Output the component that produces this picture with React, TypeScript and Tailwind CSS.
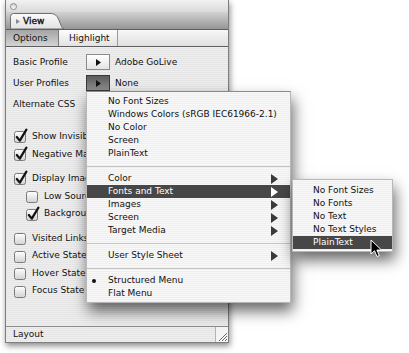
import React from "react";

function Check({ checked }: { checked?: boolean }) {
  return (
    <svg width="14" height="16" viewBox="0 0 14 16" className="shrink-0">
      <defs>
        <linearGradient id="cbg" x1="0" y1="0" x2="0" y2="1">
          <stop offset="0" stopColor="#ffffff" />
          <stop offset="1" stopColor="#d2d2d2" />
        </linearGradient>
      </defs>
      <rect x="0.5" y="3.5" width="11" height="11" rx="2" fill="url(#cbg)" stroke="#7a7a7a" />
      {checked && (
        <path
          d="M2.8 9 L5.8 12.6 L12.4 1.6"
          stroke="#111"
          strokeWidth="2.2"
          fill="none"
          strokeLinecap="round"
          strokeLinejoin="round"
        />
      )}
    </svg>
  );
}

function CheckRow({
  label,
  checked,
  indent,
  h18,
}: {
  label: string;
  checked?: boolean;
  indent?: boolean;
  h18?: boolean;
}) {
  return (
    <div
      className={`flex items-center gap-[4px] whitespace-nowrap ${h18 ? "h-[18px]" : "h-[17px]"} ${
        indent ? "pl-[20px]" : "pl-[8px]"
      }`}
    >
      <Check checked={checked} />
      <span className={`overflow-hidden ${indent ? "w-[43px]" : "w-[54px]"}`}>{label}</span>
    </div>
  );
}

function TriBtn({ pressed }: { pressed?: boolean }) {
  return (
    <div
      className={`w-[24px] h-[16px] border flex items-center justify-center ${
        pressed
          ? "bg-gradient-to-b from-[#5c5c5c] to-[#8e8e8e] border-[#3a3a3a]"
          : "bg-gradient-to-b from-[#ffffff] to-[#e4e4e4] border-[#8a8a8a]"
      }`}
    >
      <svg width="5" height="7" viewBox="0 0 5 7">
        <path d="M0 0 L5 3.5 L0 7 Z" fill="#111" />
      </svg>
    </div>
  );
}

function Arrow({ white }: { white?: boolean }) {
  return (
    <svg width="7" height="10" viewBox="0 0 7 10" className="shrink-0">
      <path d="M0 0 L7 5 L0 10 Z" fill={white ? "#ffffff" : "#3a3a3a"} />
    </svg>
  );
}

function Item({
  label,
  arrow,
  hl,
  bullet,
}: {
  label: string;
  arrow?: boolean;
  hl?: boolean;
  bullet?: boolean;
}) {
  return (
    <div
      className={`h-[13px] flex items-center pr-[12px] whitespace-nowrap ${
        hl ? "bg-[#474747] text-white" : ""
      }`}
    >
      <div className="w-[21px] h-full flex items-center pl-[5px]">
        {bullet && <div className="w-[4px] h-[4px] rounded-full bg-[#111]" />}
      </div>
      <span className="flex-1">{label}</span>
      {arrow && <Arrow white={hl} />}
    </div>
  );
}

function Sep() {
  return (
    <div className="h-[12px] flex items-center">
      <div className="w-full h-[1px] bg-[#c4c4c4]" />
    </div>
  );
}

function SubItem({ label, hl }: { label: string; hl?: boolean }) {
  return (
    <div
      className={`h-[13px] flex items-center pl-[20px] whitespace-nowrap ${
        hl ? "bg-[#474747] text-white" : ""
      }`}
    >
      {label}
    </div>
  );
}

export default function App() {
  return (
    <div className="relative w-[409px] h-[353px] overflow-hidden bg-white text-[9px] leading-none text-[#111] font-['DejaVu_Sans',sans-serif]">
      {/* Palette window */}
      <div className="ml-[5px] w-[224px] h-[343px] flex flex-col border-x border-b border-[#7d7d7d] shadow-[1px_3px_6px_rgba(0,0,0,0.45)]">
        {/* title bar */}
        <div className="h-[12px] flex items-center pl-[4px] bg-gradient-to-b from-[#f2f2f2] to-[#dadada]">
          <div className="w-[7px] h-[7px] rounded-full border border-[#8c8c8c] bg-gradient-to-b from-[#cfcfcf] to-[#ffffff]" />
        </div>
        {/* palette tab row */}
        <div className="h-[17px] flex items-end pl-[4px] bg-gradient-to-b from-[#d2d2d2] to-[#969696]">
          <div className="relative w-[54px] h-[16px]">
            <svg width="54" height="16" viewBox="0 0 54 16" className="absolute inset-0">
              <defs>
                <linearGradient id="tabg" x1="0" y1="0" x2="0" y2="1">
                  <stop offset="0" stopColor="#fbfbfb" />
                  <stop offset="1" stopColor="#e2e2e2" />
                </linearGradient>
              </defs>
              <path
                d="M0.5 16 L0.5 3.5 Q0.5 0.5 3.5 0.5 L41 0.5 Q46 0.5 48.5 6 L51.5 13.5 Q52.5 16 54 16 Z"
                fill="url(#tabg)"
                stroke="#6e6e6e"
              />
            </svg>
            <div className="relative h-full flex items-center pl-[6px] gap-[3px]">
              <svg width="4" height="5" viewBox="0 0 4 5">
                <path d="M0 0 L4 2.5 L0 5 Z" fill="#8a8a8a" />
              </svg>
              <span className="[-webkit-text-stroke:0.35px_#111]">View</span>
            </div>
          </div>
        </div>
        {/* Options / Highlight */}
        <div className="h-[18px] flex border-y border-[#5e5e5e] bg-gradient-to-b from-[#f7f7f7] to-[#e0e0e0]">
          <div className="w-[53px] flex items-center pl-[7px] border-r border-[#7a7a7a] bg-gradient-to-b from-[#a4a4a4] to-[#d4d4d4]">
            Options
          </div>
          <div className="w-[59px] flex items-center pl-[10px] border-r border-[#9a9a9a] bg-gradient-to-b from-[#fdfdfd] to-[#e2e2e2]">
            Highlight
          </div>
        </div>
        {/* content */}
        <div className="flex-1 flex flex-col pt-[7px] bg-[repeating-linear-gradient(180deg,#eeeeee_0px,#eeeeee_1px,#e5e5e5_1px,#e5e5e5_2px)]">
          <div className="flex flex-col gap-[5px]">
            <div className="h-[16px] flex items-center pl-[7px]">
              <span className="w-[73px]">Basic Profile</span>
              <TriBtn />
              <span className="ml-[5px]">Adobe GoLive</span>
            </div>
            <div className="h-[16px] flex items-center pl-[7px]">
              <span className="w-[73px]">User Profiles</span>
              <TriBtn pressed />
              <span className="ml-[5px]">None</span>
            </div>
            <div className="h-[16px] flex items-center pl-[7px]">
              <span className="w-[73px]">Alternate CSS</span>
            </div>
          </div>
          <div className="mt-[15px] flex flex-col">
            <CheckRow label="Show Invisible Elements" checked h18 />
            <CheckRow label="Negative Margins" checked h18 />
          </div>
          <div className="mt-[6px] flex flex-col">
            <CheckRow label="Display Images" checked h18 />
            <CheckRow label="Low Source" indent h18 />
            <CheckRow label="Background Images" checked indent />
          </div>
          <div className="mt-[7px] flex flex-col">
            <CheckRow label="Visited Links" h18 />
            <CheckRow label="Active State" />
            <CheckRow label="Hover State" h18 />
            <CheckRow label="Focus State" />
          </div>
        </div>
        {/* status bar */}
        <div className="h-[16px] flex items-center border-t border-[#8a8a8a] bg-[repeating-linear-gradient(180deg,#eeeeee_0px,#eeeeee_1px,#e6e6e6_1px,#e6e6e6_2px)]">
          <span className="pl-[7px]">Layout</span>
          <div className="ml-auto w-[13px] h-full border-l border-[#b4b4b4] bg-[#f4f4f4] flex items-end justify-end">
            <svg width="12" height="12" viewBox="0 0 12 12">
              <path d="M11 3 L3 11 M11 6 L6 11 M11 9 L9 11" stroke="#6a6a6a" strokeWidth="1" />
            </svg>
          </div>
        </div>
      </div>

      {/* popup menu */}
      <div className="absolute left-[86px] top-[91px] w-[205px] h-[212px] flex flex-col pt-[3px] border border-[#b8b8b8] border-t-[#8a8a8a] shadow-[2px_8px_14px_rgba(0,0,0,0.6)] bg-[repeating-linear-gradient(180deg,#f8f8f8_0px,#f8f8f8_1px,#efefef_1px,#efefef_2px)]">
        <Item label="No Font Sizes" />
        <Item label="Windows Colors (sRGB IEC61966-2.1)" />
        <Item label="No Color" />
        <Item label="Screen" />
        <Item label="PlainText" />
        <Sep />
        <Item label="Color" arrow />
        <Item label="Fonts and Text" arrow hl />
        <Item label="Images" arrow />
        <Item label="Screen" arrow />
        <Item label="Target Media" arrow />
        <Sep />
        <Item label="User Style Sheet" arrow />
        <Sep />
        <Item label="Structured Menu" bullet />
        <Item label="Flat Menu" />
      </div>

      {/* submenu */}
      <div className="absolute left-[292px] top-[179px] w-[101px] h-[73px] flex flex-col pt-[4px] border border-[#b8b8b8] shadow-[2px_8px_14px_rgba(0,0,0,0.6)] bg-[repeating-linear-gradient(180deg,#f8f8f8_0px,#f8f8f8_1px,#efefef_1px,#efefef_2px)]">
        <SubItem label="No Font Sizes" />
        <SubItem label="No Fonts" />
        <SubItem label="No Text" />
        <SubItem label="No Text Styles" />
        <SubItem label="PlainText" hl />
      </div>

      {/* mouse cursor */}
      <svg
        width="13"
        height="19"
        viewBox="0 0 13 19"
        className="absolute left-[370px] top-[239px]"
      >
        <path
          d="M1 1 L1 15 L4.5 11.8 L7 17.5 L9.3 16.5 L6.9 11 L11.5 11 Z"
          fill="#000"
          stroke="#fff"
          strokeWidth="1"
          strokeLinejoin="round"
        />
      </svg>
    </div>
  );
}
